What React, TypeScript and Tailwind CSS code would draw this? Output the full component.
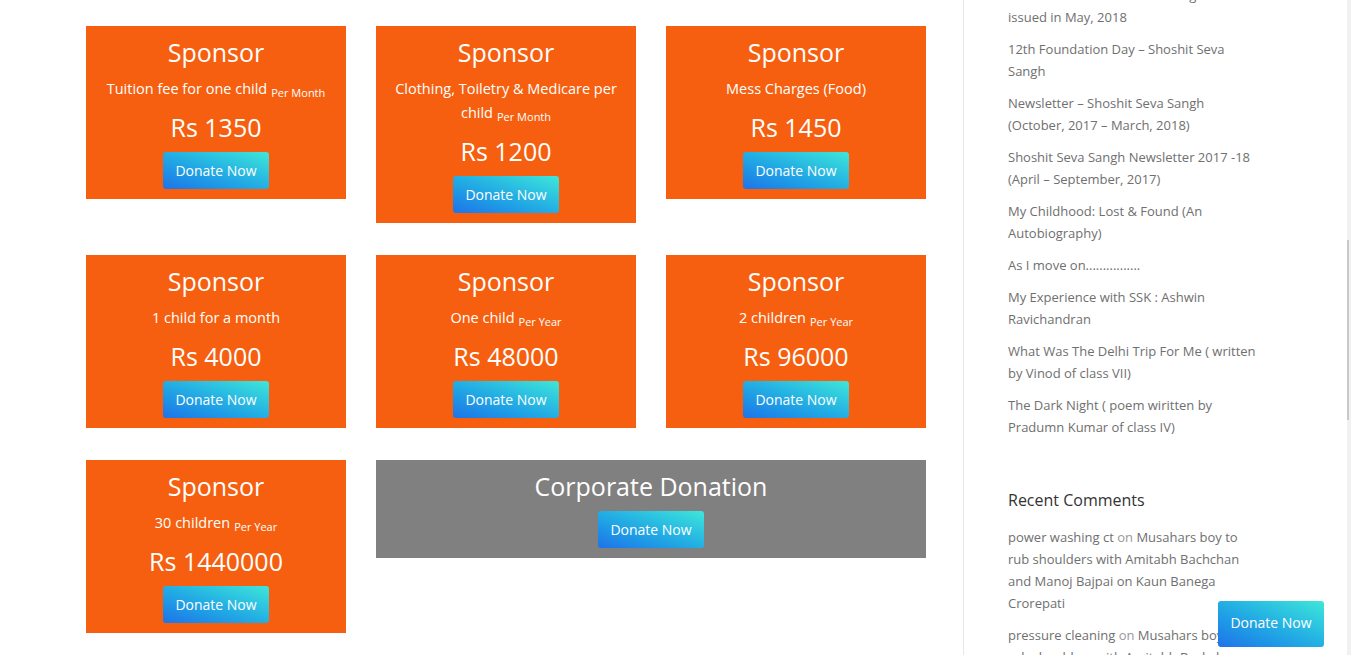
const plans = [
  { desc: "Tuition fee for one child", unit: "Per Month", price: "Rs 1350" },
  { desc: "Clothing, Toiletry & Medicare per child", unit: "Per Month", price: "Rs 1200" },
  { desc: "Mess Charges (Food)", unit: "", price: "Rs 1450" },
  { desc: "1 child for a month", unit: "", price: "Rs 4000" },
  { desc: "One child", unit: "Per Year", price: "Rs 48000" },
  { desc: "2 children", unit: "Per Year", price: "Rs 96000" },
  { desc: "30 children", unit: "Per Year", price: "Rs 1440000" },
];

const posts = [
  ["Newsletter – Shoshit Seva Sangh", "issued in May, 2018"],
  ["12th Foundation Day – Shoshit Seva", "Sangh"],
  ["Newsletter – Shoshit Seva Sangh", "(October, 2017 – March, 2018)"],
  ["Shoshit Seva Sangh Newsletter 2017 -18", "(April – September, 2017)"],
  ["My Childhood: Lost & Found (An", "Autobiography)"],
  ["As I move on................"],
  ["My Experience with SSK : Ashwin", "Ravichandran"],
  ["What Was The Delhi Trip For Me ( written", "by Vinod of class VII)"],
  ["The Dark Night ( poem wiritten by", "Pradumn Kumar of class IV)"],
];

function DonateButton({ tall }: { tall?: boolean }) {
  return (
    <button
      className={`rounded-[3px] bg-gradient-to-tr from-[#2172e8] to-[#40e6d8] px-[11px] text-[14px] text-white ${
        tall ? "h-[46px] w-[106px] pb-1" : "h-[37px] w-[106px]"
      }`}
    >
      Donate Now
    </button>
  );
}

function SponsorCard({ desc, unit, price }: { desc: string; unit: string; price: string }) {
  return (
    <div className="flex flex-col items-center bg-[#f55f0f] px-4 py-[10px] text-center text-white">
      <h3 className="text-[25px] leading-[32px]">Sponsor</h3>
      <p className="mt-2 pt-px text-[14.5px] leading-[24px]">
        {desc}
        {unit && <sub className="ml-1 text-[11px]">{unit}</sub>}
      </p>
      <div className="mt-[11px] text-[25px] leading-[30px]">{price}</div>
      <div className="mt-[10px]">
        <DonateButton />
      </div>
    </div>
  );
}

export default function App() {
  return (
    <div className="relative flex h-[655px] overflow-hidden bg-white font-['Open_Sans',sans-serif]">
      <main className="w-[963px] shrink-0 pl-[86px] pt-[26px]">
        <div className="grid grid-cols-[260px_260px_260px] items-start gap-x-[30px] gap-y-[32px]">
          {plans.map((p, i) => (
            <SponsorCard key={i} {...p} />
          ))}
          <div className="col-span-2 flex flex-col items-center bg-[#808080] py-[10px] text-white">
            <h3 className="text-[25px] leading-[32px]">Corporate Donation</h3>
            <div className="mt-[9px]">
              <DonateButton />
            </div>
          </div>
        </div>
      </main>

      <aside className="flex-1 border-l border-[#e8e8e8] pl-[44px] text-[13px] leading-[22px] text-[#6f6f6f]">
        <ul className="-mt-[16px] flex flex-col gap-[10px]">
          {posts.map((lines, i) => (
            <li key={i}>
              {lines.map((l, j) => (
                <span key={j} className="block">
                  {l}
                </span>
              ))}
            </li>
          ))}
        </ul>

        <h4 className="mt-[50px] text-[16px] leading-[24px] text-[#333]">Recent Comments</h4>
        <ul className="mt-[14px] flex flex-col gap-[10px]">
          <li>
            <span className="block">
              power washing ct <span className="text-[#999]">on</span> Musahars boy to
            </span>
            <span className="block">rub shoulders with Amitabh Bachchan</span>
            <span className="block">and Manoj Bajpai on Kaun Banega</span>
            <span className="block">Crorepati</span>
          </li>
          <li>
            <span className="block">
              pressure cleaning <span className="text-[#999]">on</span> Musahars boy to
            </span>
            <span className="block">rub shoulders with Amitabh Bachchan</span>
          </li>
        </ul>
      </aside>

      <div className="flex w-[4px] shrink-0 flex-col bg-[#f1f1f1]">
        <div className="mt-[240px] h-[180px] w-[2px] bg-[#c8c8c8]" />
      </div>

      <div className="absolute bottom-[8px] right-[27px]">
        <DonateButton tall />
      </div>
    </div>
  );
}
